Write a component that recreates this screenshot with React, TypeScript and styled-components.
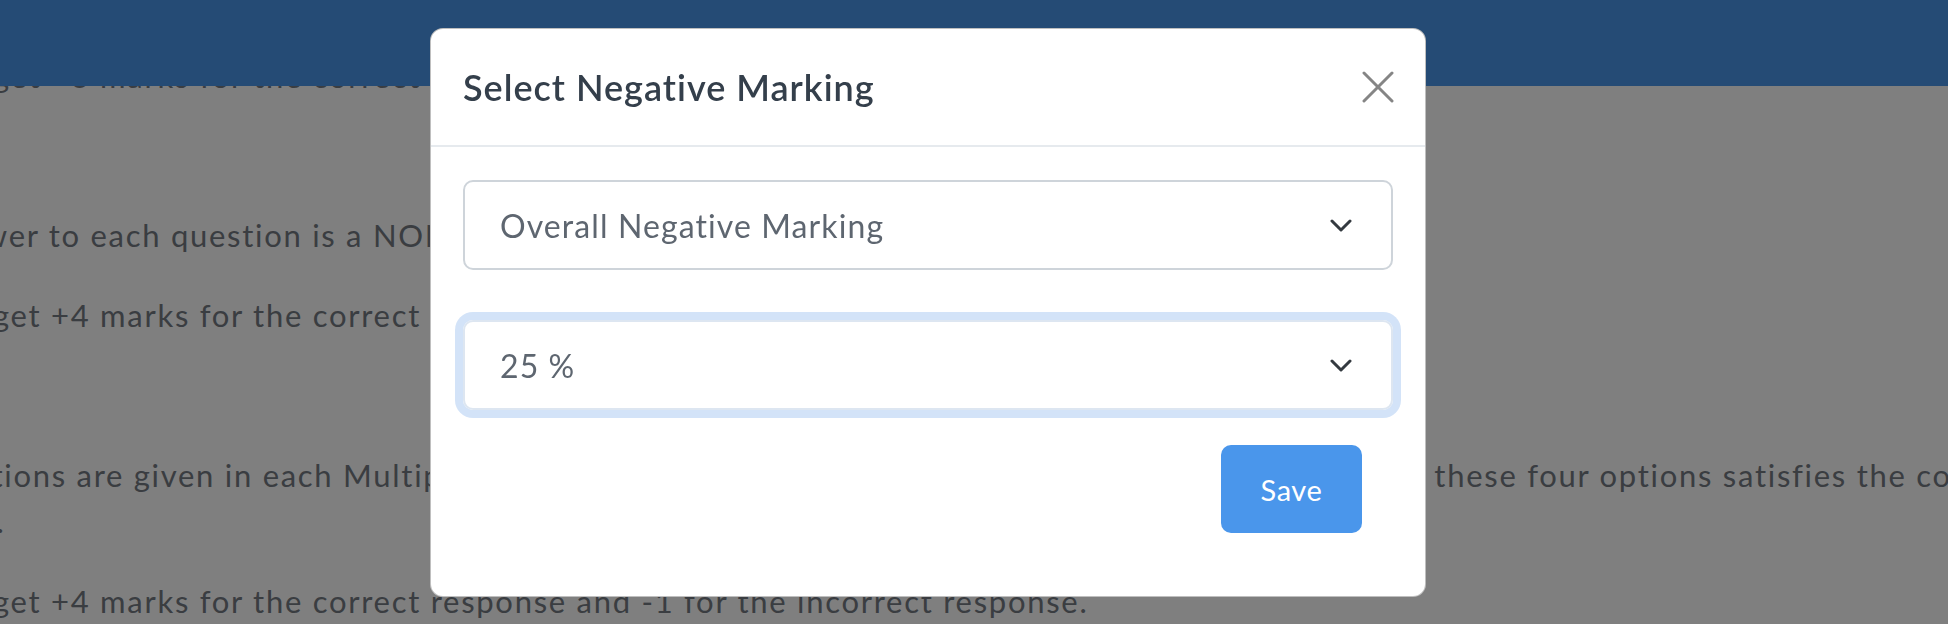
import React from "react";
import styled, { createGlobalStyle } from "styled-components";

const GlobalStyle = createGlobalStyle`
  html, body {
    margin: 0;
    padding: 0;
    background: #ffffff;
    overflow: hidden;
    font-family: "Lato", "Open Sans", sans-serif;
  }
  * { box-sizing: border-box; }
`;

const Page = styled.div`
  position: relative;
  width: 1948px;
  height: 624px;
  overflow: hidden;
  background: #ffffff;
`;

const TopBar = styled.header`
  position: fixed;
  top: 0;
  left: 0;
  right: 0;
  height: 86px;
  background: #4a96eb;
  z-index: 2;
`;

const Content = styled.main`
  padding-top: 53px;
  margin-left: -135px;
`;

const Line = styled.p<{ $space?: number; $indent?: number }>`
  margin: ${(p) => p.$space ?? 0}px 0 0;
  padding-left: ${(p) => p.$indent ?? 0}px;
  font-size: 31px;
  letter-spacing: 1.72px;
  line-height: 46px;
  color: #747a83;
  white-space: nowrap;
`;

const Backdrop = styled.div`
  position: fixed;
  inset: 0;
  background: rgba(0, 0, 0, 0.5);
  z-index: 10;
  padding: 28px 0 0 430px;
`;

const Dialog = styled.div`
  width: 996px;
  background: #ffffff;
  border: 1px solid rgba(0, 0, 0, 0.25);
  border-radius: 13px;
  display: flex;
  flex-direction: column;
`;

const DialogHeader = styled.div`
  height: 118px;
  padding: 0 31px 0 32px;
  display: flex;
  align-items: center;
  justify-content: space-between;
  border-bottom: 2px solid #e6eaee;
`;

const Title = styled.h5`
  margin: 0;
  font-size: 36px;
  font-weight: 600;
  color: #343f4b;
  letter-spacing: 1px;
`;

const CloseButton = styled.button`
  width: 32px;
  height: 32px;
  padding: 0;
  border: none;
  background: transparent;
  display: flex;
  align-items: center;
  justify-content: center;
  cursor: pointer;
`;

const DialogBody = styled.div`
  padding: 33px 32px 35px;
  display: flex;
  flex-direction: column;
  gap: 50px;
`;

const SelectBox = styled.div<{ $focused?: boolean }>`
  height: 90px;
  padding: 0 39px 0 35px;
  border: 2px solid ${(p) => (p.$focused ? "#dde6f1" : "#ced4da")};
  border-radius: 10px;
  display: flex;
  align-items: center;
  justify-content: space-between;
  box-shadow: ${(p) => (p.$focused ? "0 0 0 8px #d3e3f8" : "none")};
`;

const SelectValue = styled.span`
  font-size: 32px;
  letter-spacing: 1.1px;
  color: #5e6670;
`;

const DialogFooter = styled.div`
  padding: 0 63px 63px 0;
  display: flex;
  justify-content: flex-end;
`;

const SaveButton = styled.button`
  width: 141px;
  height: 88px;
  border: none;
  border-radius: 10px;
  background: #4a96eb;
  color: #ffffff;
  font-family: "Lato", sans-serif;
  font-size: 29px;
  letter-spacing: 0.6px;
  cursor: pointer;
`;

const Chevron = () => (
  <svg width="22" height="13" viewBox="0 0 22 13" fill="none">
    <polyline points="2,2 11,11 20,2" stroke="#343a40" strokeWidth="3" strokeLinecap="round" strokeLinejoin="round" />
  </svg>
);

const CloseIcon = () => (
  <svg width="32" height="32" viewBox="0 0 32 32" fill="none">
    <line x1="2" y1="2" x2="30" y2="30" stroke="#858585" strokeWidth="3" strokeLinecap="round" />
    <line x1="30" y1="2" x2="2" y2="30" stroke="#858585" strokeWidth="3" strokeLinecap="round" />
  </svg>
);

export default function App() {
  return (
    <>
      <GlobalStyle />
      <Page>
        <TopBar />
        <Content>
          <Line>You will get +3 marks for the correct response and -1 for the incorrect response.</Line>
          <Line $space={113}>The answer to each question is a NON-NEGATIVE INTEGER.</Line>
          <Line $space={34}>You will get +4 marks for the correct response and 0 in all other cases.</Line>
          <Line $space={114} $indent={10}>
            Four options are given in each Multiple Choice Question for every section, out of which ONLY ONE of these four options satisfies the correct
          </Line>
          <Line>question.</Line>
          <Line $space={34}>You will get +4 marks for the correct response and -1 for the incorrect response.</Line>
        </Content>
      </Page>
      <Backdrop>
        <Dialog role="dialog">
          <DialogHeader>
            <Title>Select Negative Marking</Title>
            <CloseButton aria-label="Close">
              <CloseIcon />
            </CloseButton>
          </DialogHeader>
          <DialogBody>
            <SelectBox>
              <SelectValue>Overall Negative Marking</SelectValue>
              <Chevron />
            </SelectBox>
            <SelectBox $focused>
              <SelectValue>25 %</SelectValue>
              <Chevron />
            </SelectBox>
          </DialogBody>
          <DialogFooter>
            <SaveButton>Save</SaveButton>
          </DialogFooter>
        </Dialog>
      </Backdrop>
    </>
  );
}
